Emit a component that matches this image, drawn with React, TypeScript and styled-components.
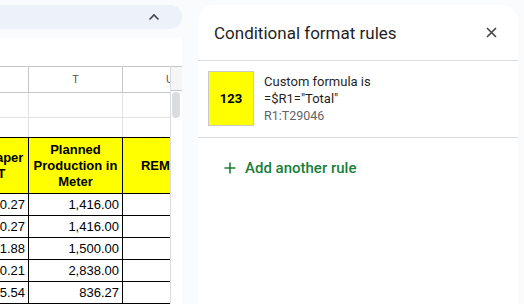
import { useLayoutEffect, useRef } from "react";
import styled, { createGlobalStyle } from "styled-components";

const GlobalStyle = createGlobalStyle`
    html, body {
        margin: 0;
        padding: 0;
    }
    body {
        background: #f9fbfd;
        font-family: Roboto, "Liberation Sans", sans-serif;
    }
`;

const Page = styled.div`
    display: flex;
    height: 304px;
    overflow: hidden;
    background: #f9fbfd;
`;

const LeftPane = styled.div`
    width: 182px;
    flex-shrink: 0;
    display: flex;
    flex-direction: column;
    padding-top: 5px;
`;

const TopBar = styled.div`
    height: 39px;
    background: #edf2fa;
    border-radius: 0 20px 20px 0;
    display: flex;
    align-items: center;
    justify-content: flex-end;
    padding-right: 22px;
    color: #444746;
`;

const Sheet = styled.div`
    margin-top: 9px;
    flex: 1;
    background: #fff;
    display: flex;
    flex-direction: column;
`;

const FormulaSpace = styled.div`
    height: 28px;
    flex-shrink: 0;
`;

const GridArea = styled.div`
    flex: 1;
    display: flex;
    min-height: 0;
`;

const Viewport = styled.div`
    width: 170px;
    overflow: hidden;
    flex-shrink: 0;
`;

const Grid = styled.div`
    width: 268px;
    font-family: "Liberation Sans", Arial, sans-serif;
`;

type Tone = "head" | "grid" | "ink";

const lineColor = (tone: Tone) =>
    tone === "ink" ? "#000" : tone === "head" ? "#c4c7c5" : "#e1e1e1";

const Row = styled.div<{ $tone: Tone; $h: number; $top?: boolean; $bottom?: boolean }>`
    display: grid;
    grid-template-columns: 80px 94px 94px;
    height: ${({ $h }) => $h}px;
    border-top: ${({ $top, $tone }) => ($top ? `1px solid ${lineColor($tone)}` : "none")};
    border-bottom: ${({ $bottom, $tone }) => ($bottom ? `1px solid ${lineColor($tone)}` : "none")};
    background: #fff;
`;

const Cell = styled.div<{ $tone: Tone; $align?: "center" | "right"; $fill?: string; $bold?: boolean }>`
    box-sizing: border-box;
    border-right: 1px solid ${({ $tone }) => lineColor($tone)};
    background: ${({ $fill }) => $fill || "transparent"};
    display: flex;
    align-items: center;
    justify-content: ${({ $align }) => ($align === "right" ? "flex-end" : "center")};
    text-align: ${({ $align }) => ($align === "right" ? "right" : "center")};
    padding: 0 ${({ $align }) => ($align === "right" ? "3px" : "2px")};
    font-size: 13px;
    line-height: 16px;
    font-weight: ${({ $bold }) => ($bold ? 700 : 400)};
    color: #000;
    white-space: ${({ $bold }) => ($bold ? "normal" : "nowrap")};
    overflow: hidden;
`;

const ColLetter = styled(Cell)`
    font-family: Roboto, sans-serif;
    font-size: 11px;
    color: #575a5e;
`;

const ScrollTrack = styled.div`
    width: 11px;
    flex-shrink: 0;
    border-left: 1px solid #dadce0;
    display: flex;
    flex-direction: column;
`;

const TrackCorner = styled.div`
    height: 23px;
    background: #f5f5f5;
    border-top: 1px solid #c4c7c5;
    border-bottom: 1px solid #c4c7c5;
`;

const Thumb = styled.div`
    margin: 1px 0 0 1px;
    width: 8px;
    height: 26px;
    border-radius: 4px;
    background: #dadce0;
`;

const Panel = styled.aside`
    flex: 1;
    margin: 5px 6px 0 16px;
    background: #fff;
    border-radius: 16px 16px 0 0;
    display: flex;
    flex-direction: column;
`;

const PanelHeader = styled.header`
    height: 55px;
    border-bottom: 1px solid #dadce0;
    display: flex;
    align-items: center;
    justify-content: space-between;
    padding: 0 15px 0 16px;
`;

const PanelTitle = styled.h1`
    margin: 0;
    font-size: 17px;
    font-weight: 400;
    color: #1f1f1f;
`;

const IconButton = styled.button`
    width: 24px;
    height: 24px;
    padding: 0;
    border: none;
    background: none;
    display: flex;
    align-items: center;
    justify-content: center;
    color: #444746;
`;

const RuleItem = styled.div`
    display: flex;
    gap: 10px;
    padding: 10px 10px 11px;
    border-bottom: 1px solid #dadce0;
`;

const Swatch = styled.div<{ $bg: string }>`
    box-sizing: border-box;
    width: 46px;
    height: 55px;
    border: 1px solid #c9c9c9;
    background: ${({ $bg }) => $bg};
    display: flex;
    align-items: center;
    justify-content: center;
    font-family: Roboto, "Liberation Sans", sans-serif;
    font-size: 13px;
    font-weight: 700;
    color: #000;
`;

const RuleText = styled.div`
    display: flex;
    flex-direction: column;
    justify-content: center;
    font-size: 13px;
    line-height: 17px;
    color: #1f1f1f;
`;

const RuleRange = styled.span`
    color: #5f6368;
    font-size: 12.5px;
`;

const AddRule = styled.button`
    align-self: flex-start;
    margin: 12px 0 0 20px;
    height: 36px;
    padding: 0 6px;
    border: none;
    background: none;
    display: flex;
    align-items: center;
    gap: 9px;
    font-family: Roboto, sans-serif;
    font-size: 15px;
    font-weight: 500;
    color: #188038;
`;

const dataRows = [
    ["0.27", "1,416.00"],
    ["0.27", "1,416.00"],
    ["1.88", "1,500.00"],
    ["0.21", "2,838.00"],
    ["5.54", "836.27"],
];

export default function App() {
    const viewRef = useRef<HTMLDivElement>(null);

    // the sheet is scrolled a little to the right
    useLayoutEffect(() => {
        if (viewRef.current) viewRef.current.scrollLeft = 51;
    }, []);

    return (
        <Page>
            <GlobalStyle />
            <LeftPane>
                <TopBar>
                    <svg width="12" height="8" viewBox="0 0 12 8" fill="none">
                        <path d="M1.5 6.5 L6 2 L10.5 6.5" stroke="currentColor" strokeWidth="1.6" />
                    </svg>
                </TopBar>
                <Sheet>
                    <FormulaSpace />
                    <GridArea>
                        <Viewport ref={viewRef}>
                            <Grid>
                                <Row $tone="head" $h={25} $top $bottom>
                                    <ColLetter $tone="head">S</ColLetter>
                                    <ColLetter $tone="head">T</ColLetter>
                                    <ColLetter $tone="head">U</ColLetter>
                                </Row>
                                <Row $tone="grid" $h={24} $bottom>
                                    <Cell $tone="grid" />
                                    <Cell $tone="grid" />
                                    <Cell $tone="grid" />
                                </Row>
                                <Row $tone="grid" $h={19}>
                                    <Cell $tone="grid" />
                                    <Cell $tone="grid" />
                                    <Cell $tone="grid" />
                                </Row>
                                <Row $tone="ink" $h={55} $top $bottom>
                                    <Cell $tone="ink" $fill="#ffff00" $bold>Total Paper in MT</Cell>
                                    <Cell $tone="ink" $fill="#ffff00" $bold>Planned Production in Meter</Cell>
                                    <Cell $tone="ink" $fill="#ffff00" $bold>REMARK</Cell>
                                </Row>
                                {dataRows.map(([mt, meter], i) => (
                                    <Row key={i} $tone="ink" $h={21} $bottom>
                                        <Cell $tone="ink" $align="right">{mt}</Cell>
                                        <Cell $tone="ink" $align="right">{meter}</Cell>
                                        <Cell $tone="ink" />
                                    </Row>
                                ))}
                            </Grid>
                        </Viewport>
                        <ScrollTrack>
                            <TrackCorner />
                            <Thumb />
                        </ScrollTrack>
                    </GridArea>
                </Sheet>
            </LeftPane>

            <Panel>
                <PanelHeader>
                    <PanelTitle>Conditional format rules</PanelTitle>
                    <IconButton aria-label="Close">
                        <svg width="11" height="11" viewBox="0 0 11 11" fill="none">
                            <path d="M1 1 L10 10 M10 1 L1 10" stroke="currentColor" strokeWidth="1.6" />
                        </svg>
                    </IconButton>
                </PanelHeader>
                <RuleItem>
                    <Swatch $bg="#ffff00">123</Swatch>
                    <RuleText>
                        <span>Custom formula is</span>
                        <span>=$R1="Total"</span>
                        <RuleRange>R1:T29046</RuleRange>
                    </RuleText>
                </RuleItem>
                <AddRule>
                    <svg width="12" height="12" viewBox="0 0 12 12" fill="none">
                        <path d="M6 0.5 V11.5 M0.5 6 H11.5" stroke="currentColor" strokeWidth="1.6" />
                    </svg>
                    Add another rule
                </AddRule>
            </Panel>
        </Page>
    );
}
